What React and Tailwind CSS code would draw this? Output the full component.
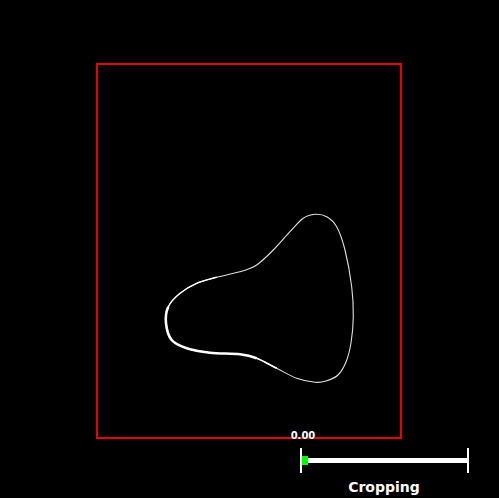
import React from "react";

const pts = [
  [315, 214.3], [326.7, 216.7], [336.7, 226.7], [345, 250], [351.7, 286.7],
  [353.3, 316.7], [351, 343], [346, 362], [338, 375], [326, 381], [315, 382.3],
  [296.7, 378.3], [276.7, 368.3], [256.7, 358.3], [240, 354.3], [210, 352.7],
  [186.7, 348.3], [171.7, 340], [166, 323.3], [168.3, 306.7], [180, 293.3],
  [196.7, 283.3], [216.7, 277.3], [243.3, 270.7], [256.7, 265], [273.3, 250],
  [290, 231.7], [303.3, 218.3],
];

function catmull(points, closed, from = 0, to = points.length) {
  const n = points.length;
  const get = (i) => (closed ? points[(i + n) % n] : points[Math.max(0, Math.min(n - 1, i))]);
  let d = `M${get(from)[0]},${get(from)[1]}`;
  for (let i = from; i < to; i++) {
    const p0 = get(i - 1), p1 = get(i), p2 = get(i + 1), p3 = get(i + 2);
    const c1 = [p1[0] + (p2[0] - p0[0]) / 6, p1[1] + (p2[1] - p0[1]) / 6];
    const c2 = [p2[0] - (p3[0] - p1[0]) / 6, p2[1] - (p3[1] - p1[1]) / 6];
    d += ` C${c1[0].toFixed(2)},${c1[1].toFixed(2)} ${c2[0].toFixed(2)},${c2[1].toFixed(2)} ${p2[0]},${p2[1]}`;
  }
  return d;
}

const full = catmull(pts, true, 0, pts.length);
const thick = catmull(pts, true, 13, 19);
const taper = catmull(pts, true, 12, 13);
const mid = catmull(pts, true, 19, 22);

export default function App() {
  return (
    <div
      className="relative w-[499px] h-[498px] bg-black overflow-hidden"
      style={{ fontFamily: '"DejaVu Sans", Verdana, sans-serif' }}
    >
      <svg className="absolute left-0 top-0" width="499" height="498" viewBox="0 0 499 498">
        <path d={full} fill="none" stroke="#e0e0e0" strokeWidth="1.1" />
        <path d={mid} fill="none" stroke="#ffffff" strokeWidth="1.4" />
        <path d={taper} fill="none" stroke="#ffffff" strokeWidth="1.7" />
        <path d={thick} fill="none" stroke="#ffffff" strokeWidth="2.6" />
      </svg>

      <div className="absolute left-[96px] top-[63px] w-[306px] h-[376px] border-2 border-[#ee0000]" />

      <div className="absolute left-[289px] top-[430px] w-[28px] text-center text-[10px] font-bold leading-[12px] text-white">
        0.00
      </div>

      <div className="absolute left-[300px] top-[448px] w-[169px] h-[25px] flex items-center">
        <div className="w-[2px] h-full bg-white" />
        <div className="relative flex-1 h-[5px] bg-white">
          <div className="absolute left-0 top-[-2px] w-[6px] h-[9px] bg-[#00ff00]" />
        </div>
        <div className="w-[2px] h-full bg-white" />
      </div>

      <div className="absolute left-[334px] top-[478px] w-[100px] text-center text-[14px] font-bold leading-[18px] text-white">
        Cropping
      </div>
    </div>
  );
}
